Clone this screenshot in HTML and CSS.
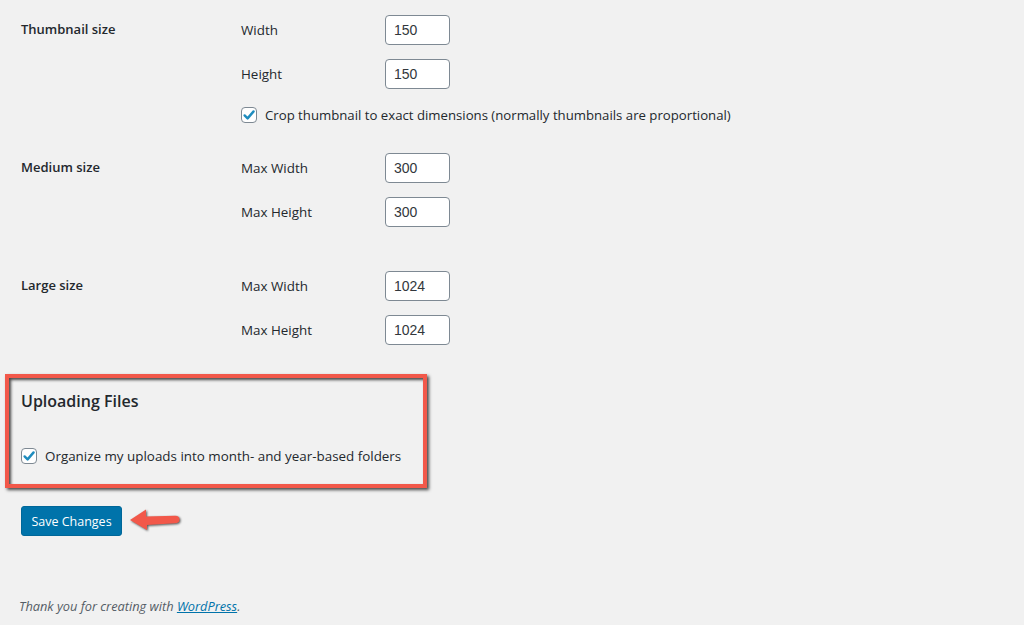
FILE: index.html
```html
<!DOCTYPE html>
<html lang="en">
<head>
<meta charset="utf-8">
<title>Media Settings</title>
<link rel="stylesheet" href="styles.css">
</head>
<body>
<div class="wrap">
  <div class="form-table">
    <div class="row row-thumb">
      <div class="th">Thumbnail size</div>
      <div class="td">
        <div class="field"><label class="flabel">Width</label><input class="num" type="text" value="150"></div>
        <div class="field"><label class="flabel">Height</label><input class="num" type="text" value="150"></div>
        <label class="check-line crop"><span class="cb"><svg viewBox="0 0 16 16" width="16" height="16"><path d="M3.6 8.4 L6.6 11.4 L12.6 4.4" fill="none" stroke="#1e8cbe" stroke-width="2.4" stroke-linecap="round" stroke-linejoin="round"/></svg></span>Crop thumbnail to exact dimensions (normally thumbnails are proportional)</label>
      </div>
    </div>
    <div class="row row-medium">
      <div class="th">Medium size</div>
      <div class="td">
        <div class="field"><label class="flabel">Max Width</label><input class="num" type="text" value="300"></div>
        <div class="field"><label class="flabel">Max Height</label><input class="num" type="text" value="300"></div>
      </div>
    </div>
    <div class="row row-large">
      <div class="th">Large size</div>
      <div class="td">
        <div class="field"><label class="flabel">Max Width</label><input class="num" type="text" value="1024"></div>
        <div class="field"><label class="flabel">Max Height</label><input class="num" type="text" value="1024"></div>
      </div>
    </div>
  </div>

  <div class="highlight">
    <h2 class="section-title">Uploading Files</h2>
    <label class="check-line"><span class="cb"><svg viewBox="0 0 16 16" width="16" height="16"><path d="M3.6 8.4 L6.6 11.4 L12.6 4.4" fill="none" stroke="#1e8cbe" stroke-width="2.4" stroke-linecap="round" stroke-linejoin="round"/></svg></span>Organize my uploads into month- and year-based folders</label>
  </div>

  <div class="submit">
    <button class="button-primary" type="button">Save Changes</button>
    <svg class="arrow" width="56" height="26" viewBox="0 0 56 26">
      <path d="M0 12 L16 1.5 L16 8.5 L45 7.8 Q49.5 7.7 49.5 11.5 Q49.5 15.3 45 15.3 L17 17 L17 22 Z" fill="#f2584a"/>
    </svg>
  </div>

  <p class="footer">Thank you for creating with <a href="#">WordPress</a>.</p>
</div>
</body>
</html>
```
FILE: styles.css
```css
* { box-sizing: border-box; }
html, body { margin: 0; padding: 0; }
body {
  background: #f1f1f1;
  color: #23282d;
  font-family: "Open Sans", "Noto Sans", sans-serif;
  font-size: 13.4px;
  width: 1024px;
  height: 625px;
  overflow: hidden;
}
.wrap { padding-left: 21px; }
.form-table { display: flex; flex-direction: column; }
.row { display: grid; grid-template-columns: 220px 1fr; }
.row-thumb { padding-top: 15px; }
.row-medium { margin-top: 28px; }
.row-large { margin-top: 44px; }
.th {
  font-weight: 600;
  line-height: 29px;
  font-size: 13px;
}
.td { display: flex; flex-direction: column; gap: 14px; }
.field { display: flex; align-items: center; height: 30px; }
.flabel { width: 144px; line-height: 30px; }
.num {
  width: 65px;
  height: 30px;
  border: 1px solid #7e8993;
  border-radius: 4px;
  background: #fff;
  color: #32373c;
  font-family: "Liberation Sans", Arial, sans-serif;
  font-size: 14px;
  padding: 0 8px;
  margin: 0;
  outline: none;
}
.check-line { display: flex; align-items: center; line-height: 20px; }
.crop { margin-top: 2px; font-size: 13.2px; }
.cb {
  width: 16px; height: 16px;
  border: 1px solid #7e8993;
  border-radius: 4px;
  background: #fff;
  margin-right: 8px;
  display: flex; align-items: center; justify-content: center;
  flex: none;
}
.cb svg { display: block; margin: -1px; }
.highlight {
  margin-left: -16px;
  margin-top: 29px;
  width: 422px;
  height: 114px;
  border: 4px solid #f2584a;
  box-shadow: 2px 2px 3px rgba(0,0,0,0.7), inset 2px 2px 3px rgba(0,0,0,0.7);
  padding: 10px 0 0 12px;
}
.section-title {
  margin: 0;
  font-size: 16px;
  font-weight: 600;
  line-height: 26px;
  color: #23282d;
}
.highlight .check-line { margin-top: 32px; }
.submit { display: flex; align-items: center; margin-top: 18px; }
.button-primary {
  height: 30px;
  width: 101px;
  background: #0073aa;
  border: 1px solid #006799;
  border-radius: 3px;
  color: #fff;
  font-family: "Open Sans", "Noto Sans", sans-serif;
  font-size: 12.5px;
  padding: 0;
}
.arrow {
  margin-left: 8px;
  filter: drop-shadow(1.5px 1.5px 1px rgba(0,0,0,0.65));
}
.footer {
  margin: 61px 0 0 -2px;
  font-style: italic;
  font-size: 12.8px;
  color: #555d66;
}
.footer a { color: #0073aa; }
```
